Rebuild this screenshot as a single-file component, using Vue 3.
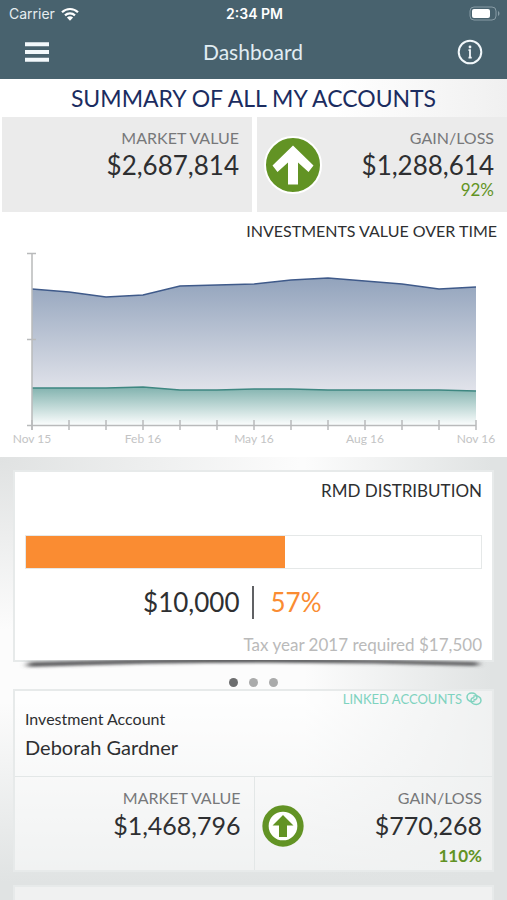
<script setup>
import { computed, ref } from 'vue';

const activeSlide = ref(0);
const slides = ['RMD distribution', 'Asset allocation', 'Performance'];

const rmd = {
    amount: '$10,000',
    percent: 57,
    note: 'Tax year 2017 required $17,500'
};

// Chart geometry, in viewBox units
const left = 32;
const right = 476;
const base = 180;

const total = [44, 47, 52, 50, 41, 40, 39, 35, 33, 36, 39, 44, 42];
const invested = [143, 143, 143, 142, 145, 145, 144, 144, 145, 145, 145, 145, 146];
const labels = { 0: 'Nov 15', 3: 'Feb 16', 6: 'May 16', 9: 'Aug 16', 12: 'Nov 16' };

const ticks = total.map((_, i) => left + (i * (right - left)) / (total.length - 1));

const toLine = (values) => values.map((y, i) => `${ticks[i]},${y}`).join(' ');
const toArea = (values) => `${left},${base} ${toLine(values)} ${right},${base}`;

const totalLine = computed(() => toLine(total));
const totalArea = computed(() => toArea(total));
const investedLine = computed(() => toLine(invested));
const investedArea = computed(() => toArea(invested));
</script>

<template>
    <div class="page">
        <header class="header">
            <div class="status">
                <span class="carrier">
                    Carrier
                    <svg width="18" height="14" viewBox="0 0 18 14">
                        <path d="M1 5.2a11.6 11.6 0 0 1 16 0M4 8.4a7.3 7.3 0 0 1 10 0" fill="none" stroke="#fff"
                            stroke-width="2.2" />
                        <path d="M9 13.8 5.9 10.6a4.5 4.5 0 0 1 6.2 0z" fill="#fff" />
                    </svg>
                </span>
                <span class="time">2:34 PM</span>
                <svg class="battery" width="31" height="15" viewBox="0 0 31 15">
                    <rect x="1" y="1" width="26" height="13" rx="4" fill="none" stroke="#879ba5" />
                    <rect x="3" y="3" width="18" height="9" rx="2" fill="#fff" />
                    <path d="M29 5c2 1 2 4 0 5z" fill="#879ba5" />
                </svg>
            </div>
            <nav class="nav">
                <button class="icon-button" type="button" aria-label="Menu">
                    <svg width="24" height="20" viewBox="0 0 24 20">
                        <path d="M0 2.3h24M0 10h24M0 17.7h24" stroke="#f2f8fb" stroke-width="4" />
                    </svg>
                </button>
                <h1 class="nav-title">Dashboard</h1>
                <button class="icon-button" type="button" aria-label="Information">
                    <svg width="26" height="26" viewBox="0 0 26 26">
                        <circle cx="13" cy="13" r="11.3" fill="none" stroke="#f2f8fb" stroke-width="2" />
                        <circle cx="13" cy="8" r="1.4" fill="#f2f8fb" />
                        <path d="M11.5 11.2H13V19M11.5 18.7h3.2" fill="none" stroke="#f2f8fb" stroke-width="1.8" />
                    </svg>
                </button>
            </nav>
        </header>

        <main class="content">
            <h2 class="summary-title">SUMMARY OF ALL MY ACCOUNTS</h2>

            <section class="summary">
                <div class="tile">
                    <div class="figures">
                        <span class="label">MARKET VALUE</span>
                        <span class="value">$2,687,814</span>
                    </div>
                </div>
                <div class="tile">
                    <svg width="58" height="58" viewBox="0 0 58 58">
                        <circle cx="29" cy="29" r="28" fill="#629324" stroke="#fff" stroke-width="2" />
                        <path d="M29 9.5 49.5 29.5 44.5 36 34 26.5V48.5H24V26.5L13.5 36 8.5 29.5z" fill="#fff" />
                    </svg>
                    <div class="figures">
                        <span class="label">GAIN/LOSS</span>
                        <span class="value">$1,288,614</span>
                        <span class="gain">92%</span>
                    </div>
                </div>
            </section>

            <section class="chart">
                <h3 class="chart-title">INVESTMENTS VALUE OVER TIME</h3>
                <svg class="chart-plot" viewBox="0 0 507 205">
                    <defs>
                        <linearGradient id="total-fill" x1="0" y1="33" x2="0" y2="160" gradientUnits="userSpaceOnUse">
                            <stop offset="0" stop-color="#92a3bc" />
                            <stop offset="1" stop-color="#ebebf0" />
                        </linearGradient>
                        <linearGradient id="invested-fill" x1="0" y1="142" x2="0" y2="180"
                            gradientUnits="userSpaceOnUse">
                            <stop offset="0" stop-color="#81b2ae" />
                            <stop offset="1" stop-color="#fbfdfd" />
                        </linearGradient>
                    </defs>
                    <polygon :points="totalArea" fill="url(#total-fill)" />
                    <polygon :points="investedArea" fill="url(#invested-fill)" />
                    <polyline :points="totalLine" class="line total" />
                    <polyline :points="investedLine" class="line invested" />
                    <path class="axis" d="M32 8V185M27 8.5h9M27 94.5h9M27 180.5h449" />
                    <path v-for="x in ticks" :key="x" class="axis" :d="`M${x} 175v10`" />
                    <text v-for="(text, i) in labels" :key="i" class="axis-label" :x="ticks[i]" y="198">
                        {{ text }}
                    </text>
                </svg>
            </section>

            <section class="card rmd">
                <h3 class="rmd-title">RMD DISTRIBUTION</h3>
                <div class="bar">
                    <div class="bar-fill" :style="{ width: rmd.percent + '%' }"></div>
                </div>
                <div class="rmd-figures">
                    <span class="rmd-amount">{{ rmd.amount }}</span>
                    <span class="rmd-percent">{{ rmd.percent }}%</span>
                </div>
                <p class="rmd-note">{{ rmd.note }}</p>
                <svg class="card-shadow" viewBox="0 0 480 16" preserveAspectRatio="none">
                    <defs>
                        <filter id="soft" x="-10" y="-10" width="500" height="36" filterUnits="userSpaceOnUse">
                            <feGaussianBlur stdDeviation="4 1.6" />
                        </filter>
                    </defs>
                    <path d="M14 2 240 -3 466 2V6Q240 -1 12 7z" fill="#4c4e50" fill-opacity="0.9"
                        filter="url(#soft)" />
                </svg>
            </section>

            <div class="dots">
                <button v-for="(slide, i) in slides" :key="slide" type="button" class="dot"
                    :class="{ active: i === activeSlide }" :aria-label="slide" @click="activeSlide = i"></button>
            </div>

            <section class="card account">
                <a href="#" class="linked">
                    LINKED ACCOUNTS
                    <svg width="16" height="14" viewBox="0 0 16 14" fill="none" stroke="#7fd3bf" stroke-width="1.5">
                        <path d="M8.5 9.3C4.5 10.5 1 8.4 1 5.2 1 2.8 3 1 5.8 1 8.8 1 11 3 11 5.3 11 7.2 9.2 8.2 7.5 7.6" />
                        <path
                            d="M7.3 4.2C11.3 3 15 5 15 8.3 15 10.7 13 12.5 10.2 12.5 7.2 12.5 5 10.5 5 8.2 5 6.3 6.8 5.3 8.5 5.9" />
                    </svg>
                </a>
                <div class="owner">
                    <span class="account-type">Investment Account</span>
                    <span class="account-name">Deborah Gardner</span>
                </div>
                <div class="account-figures">
                    <div class="cell">
                        <div class="figures">
                            <span class="label">MARKET VALUE</span>
                            <span class="value">$1,468,796</span>
                        </div>
                    </div>
                    <div class="cell">
                        <svg width="42" height="42" viewBox="0 0 42 42">
                            <circle cx="21" cy="21" r="17.5" fill="#fff" stroke="#629324" stroke-width="6.3" />
                            <path d="M21 10 31.5 20.5H25V32H17V20.5H10.5z" fill="#629324" />
                        </svg>
                        <div class="figures">
                            <span class="label">GAIN/LOSS</span>
                            <span class="value">$770,268</span>
                            <span class="gain">110%</span>
                        </div>
                    </div>
                </div>
            </section>

            <section class="card next"></section>
        </main>
    </div>
</template>

<style>
body {
    margin: 0;
}
</style>

<style scoped>
.page {
    display: flex;
    flex-direction: column;
    min-height: 100vh;
    font-family: Lato, "Liberation Sans", sans-serif;
    color: #2e2f31;
    background:
        linear-gradient(to right, rgba(224, 228, 228, 0) 60%, #e0e3e3 97%),
        linear-gradient(to bottom, rgba(226, 229, 229, 0) 78%, #e0e3e3 98%),
        radial-gradient(ellipse 300px 170px at 0 460px, #e0e2e2 0, rgba(255, 255, 255, 0) 100%),
        #fcfcfc;
}

h1,
h2,
h3,
p {
    margin: 0;
    font-weight: 400;
}

button {
    padding: 0;
    border: 0;
    background: none;
    cursor: pointer;
}

svg {
    flex: none;
    display: block;
}

.header {
    color: #fff;
    background: #48626e;
}

.status {
    display: grid;
    grid-template-columns: 1fr auto 1fr;
    align-items: center;
    height: 27px;
    padding: 0 7px 0 9px;
    font-family: Inter, sans-serif;
    font-size: 14px;
}

.carrier {
    display: flex;
    align-items: center;
    gap: 6px;
    color: #e6edf0;
}

.time {
    font-weight: 600;
}

.battery {
    justify-self: end;
}

.nav {
    display: flex;
    align-items: center;
    justify-content: space-between;
    box-sizing: border-box;
    height: 52px;
    padding: 0 24px 3px 25px;
}

.nav-title {
    font-size: 21px;
    color: #e1edf3;
}

.content {
    flex: 1;
    display: flex;
    flex-direction: column;
}

.summary-title {
    font-size: 23px;
    line-height: 38px;
    text-align: center;
    color: #1b2c60;
    background: linear-gradient(to right, #fff 66%, #f0f0f0);
}

.summary {
    display: grid;
    grid-template-columns: 1fr 1fr;
    gap: 5px;
    padding-left: 2px;
    background: #fff;
}

.tile {
    display: flex;
    align-items: center;
    height: 95px;
    padding: 0 13px 0 7px;
    box-sizing: border-box;
    background: #ebebeb;
}

.figures {
    flex: 1;
    display: flex;
    flex-direction: column;
    align-self: flex-start;
    padding-top: 9px;
    text-align: right;
}

.label {
    font-size: 16px;
    line-height: 23px;
    color: #77787a;
}

.value {
    font-size: 26px;
    line-height: 32px;
}

.gain {
    font-size: 17px;
    line-height: 17px;
    color: #629324;
}

.chart {
    padding-bottom: 7px;
    background: #fff;
}

.chart-title,
.rmd-title {
    padding: 4px 10px 0;
    font-size: 17px;
    line-height: 29px;
    text-align: right;
}

.chart-title {
    padding-top: 5px;
    font-size: 16px;
    line-height: 28px;
}

.chart-plot {
    width: 100%;
}

.line {
    fill: none;
    stroke-width: 1.6;
}

.line.total {
    stroke: #3f5a8a;
}

.line.invested {
    stroke: #3e8781;
}

.axis {
    fill: none;
    stroke: #b9babb;
    stroke-width: 1.5;
}

.axis-label {
    font-size: 12px;
    text-anchor: middle;
    fill: #c3c4c5;
}

.card {
    position: relative;
    margin: 0 13px;
    border: 2px solid #e7eaea;
    background: rgba(255, 255, 255, 0.5);
}

.rmd {
    margin-top: 13px;
    padding-bottom: 3px;
    background: #fff;
}

.bar {
    height: 32px;
    margin: 30px 10px 0;
    border: 1px solid #e5e8e8;
}

.bar-fill {
    height: 100%;
    background: #fa8c32;
}

.rmd-figures {
    display: grid;
    grid-template-columns: 1fr 1fr;
    margin-top: 17px;
    font-size: 26px;
    line-height: 33px;
}

.rmd-amount {
    padding-right: 12px;
    border-right: 2px solid #606164;
    text-align: right;
}

.rmd-percent {
    padding-left: 17px;
    color: #fa8c32;
}

.rmd-note {
    padding: 14px 10px 0;
    font-size: 17px;
    line-height: 24px;
    text-align: right;
    color: #bababa;
}

.card-shadow {
    position: absolute;
    top: 100%;
    left: 0;
    width: 100%;
    height: 16px;
}

.dots {
    display: flex;
    justify-content: center;
    gap: 11px;
    padding: 16px 0 2px;
}

.dot {
    width: 9px;
    height: 9px;
    border-radius: 50%;
    background: #aaabab;
}

.dot.active {
    background: #6d6e6f;
}

.linked {
    display: flex;
    justify-content: flex-end;
    align-items: center;
    gap: 4px;
    padding-right: 10px;
    font-size: 13px;
    line-height: 16px;
    text-decoration: none;
    color: #7fd3bf;
}

.owner {
    display: flex;
    flex-direction: column;
    padding: 0 10px 12px;
}

.account-type {
    font-size: 16px;
    line-height: 24px;
}

.account-name {
    font-size: 20px;
    line-height: 33px;
}

.account-figures {
    display: grid;
    grid-template-columns: 1fr 1fr;
    border-top: 1px solid #e3e7e7;
}

.cell {
    display: flex;
    align-items: center;
    box-sizing: border-box;
    height: 93px;
    padding: 5px 13px 0 7px;
}

.cell + .cell {
    padding-right: 10px;
    border-left: 1px solid #e3e7e7;
}

.cell .figures {
    padding-top: 4px;
}

.cell .value {
    font-size: 25px;
}

.cell .gain {
    font-weight: 700;
    line-height: 29px;
}

.next {
    flex: 1;
    min-height: 10px;
    margin-top: 13px;
    border-bottom: 0;
}
</style>
